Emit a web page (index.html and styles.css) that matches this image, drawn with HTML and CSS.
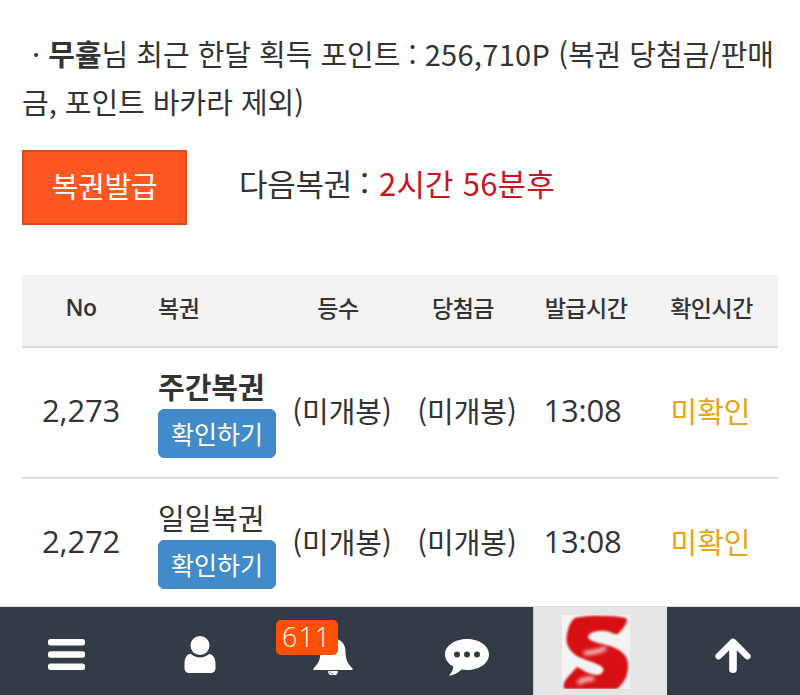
FILE: index.html
```html
<!DOCTYPE html>
<html lang="ko">
<head>
    <meta charset="UTF-8">
    <title>복권</title>
    <link rel="stylesheet" href="styles.css">
</head>

<body>
    <section class="content">
        <p class="summary">&nbsp;· <b>무휼</b>님 최근 한달 획득 포인트 : <span class="digits">256,710P</span> (복권 당첨금/판매금, 포인트 바카라 제외)</p>

        <div class="issue">
            <a class="issue-btn">복권발급</a>
            <span class="next">다음복권 : <em>2시간 56분후</em></span>
        </div>

        <table class="lotto">
            <thead>
                <tr>
                    <th class="col-no">No</th>
                    <th class="col-name">복권</th>
                    <th class="col-rank">등수</th>
                    <th class="col-prize">당첨금</th>
                    <th class="col-time">발급시간</th>
                    <th class="col-check">확인시간</th>
                </tr>
            </thead>
            <tbody>
                <tr>
                    <td class="num">2,273</td>
                    <td class="col-name"><strong>주간복권</strong><a class="check-btn">확인하기</a></td>
                    <td class="sealed">(미개봉)</td>
                    <td class="sealed">(미개봉)</td>
                    <td class="num time">13:08</td>
                    <td class="unread">미확인</td>
                </tr>
                <tr>
                    <td class="num">2,272</td>
                    <td class="col-name"><span>일일복권</span><a class="check-btn">확인하기</a></td>
                    <td class="sealed">(미개봉)</td>
                    <td class="sealed">(미개봉)</td>
                    <td class="num time">13:08</td>
                    <td class="unread">미확인</td>
                </tr>
            </tbody>
        </table>
    </section>

    <nav class="bottom-nav">
        <a class="nav-item">
            <svg width="38" height="32" viewBox="0 0 38 32"><rect y="0" width="37" height="6.5" rx="2.5"/><rect y="12.3" width="37" height="6.5" rx="2.5"/><rect y="24.6" width="37" height="6.5" rx="2.5"/></svg>
        </a>
        <a class="nav-item">
            <svg width="32" height="37" viewBox="0 0 32 37"><circle cx="16" cy="9.500" r="9.500"/><path d="M7 18c2.500 2.300 5.500 3.500 9 3.500s6.500-1.200 9-3.500c4.500.5 6.500 4.500 6.500 10v4c0 3-2 5-5 5h-21c-3 0-5-2-5-5v-4c0-5.500 2-9.500 5.500-10z"/></svg>
        </a>
        <a class="nav-item bell">
            <svg width="40" height="40" viewBox="0 0 40 40"><path d="M20 1c2 0 3 1.500 3 3 6 1.200 9.500 6 9.500 12 0 9 2 12 7 17.500.5 1 0 1.500-1 1.500H1.500c-1 0-1.500-.5-1-1.500C5.500 28 7.500 25 7.500 16c0-6 3.500-10.800 9.500-12 0-1.500 1-3 3-3z"/><path d="M15 36h10a5 5 0 0 1-10 0z"/><path class="clapper" d="M16.500 35.500a3.500 3.500 0 0 0 4 3.500"/></svg>
            <span class="badge">611</span>
        </a>
        <a class="nav-item chat">
            <svg width="44" height="37" viewBox="0 0 44 37"><path d="M22 0c12 0 22 6.500 22 15.500S34 31 22 31c-2 0-3.800-.2-5.500-.5C13 34 8 36.500 4 36.500c2.500-2.500 4-5.500 4.300-9C3.200 24.800 0 20.500 0 15.500 0 6.500 10 0 22 0z"/><g class="dots"><circle cx="12" cy="15.500" r="3"/><circle cx="22" cy="15.500" r="3"/><circle cx="32" cy="15.500" r="3"/></g></svg>
        </a>
        <a class="nav-item logo">
            <svg width="68" height="74" viewBox="0 0 68 74"><rect width="68" height="74" fill="#f3f3f3"/><path class="logo-s" d="M13 3C25 0 50 0 64 3 67 6 62 13 56 19 53 20 50 17 44 16 36 15 27 17 26 22 27 27 38 28 48 31 60 35 67 42 66 52 66 62 60 70 55 74L3 74C0 72 2 66 6 62L15 52C20 54 26 60 36 60 41 59 43 55 40 52 36 48 22 45 15 41 7 36 3 28 5 20 6 12 9 6 13 3Z"/><path class="logo-shine" d="M22 38C30 38 38 36 44 33M16 68C22 64 26 63 32 64"/></svg>
        </a>
        <a class="nav-item">
            <svg width="38" height="36" viewBox="0 0 38 36"><path d="M19 1.500c.9 0 1.700.4 2.300 1l14.500 14.500c1.300 1.300 1.300 3.300 0 4.600-1.300 1.300-3.300 1.300-4.600 0l-8.400-8.400v19.800c0 1.800-1.500 3-3.800 3s-3.800-1.200-3.800-3V13.200l-8.400 8.400c-1.300 1.300-3.300 1.300-4.600 0-1.300-1.300-1.300-3.300 0-4.600L16.700 2.500c.6-.6 1.400-1 2.300-1z"/></svg>
        </a>
    </nav>
</body>
</html>
```

FILE: styles.css
```css
* {
    box-sizing: border-box;
}

html, body {
    height: 100%;
}

body {
    margin: 0;
    overflow: hidden;
    background: #fff;
    color: #333;
    font-family: "Noto Sans CJK KR", "Noto Sans", sans-serif;
}

.content {
    padding: 29px 22px 0;
}

.summary {
    margin: 0;
    font-size: 29px;
    line-height: 48px;
    letter-spacing: -0.03px;
    text-indent: 2px;
}

.digits {
    letter-spacing: 0.3px;
}

.issue {
    display: flex;
    align-items: center;
    margin-top: 25px;
}

.issue-btn {
    width: 165px;
    height: 75px;
    line-height: 67px;
    text-align: center;
    background: #ff5722;
    border: 2px solid #d84b20;
    color: #fff;
    font-size: 29px;
    letter-spacing: -0.3px;
}

.next {
    margin-left: 52px;
    margin-bottom: 10px;
    font-size: 31px;
    letter-spacing: -0.3px;
}

.next em {
    margin-left: 2px;
    font-style: normal;
    letter-spacing: 0.2px;
    color: #c9151b;
}

.lotto {
    width: 756px;
    margin-top: 50px;
    border-collapse: collapse;
    table-layout: fixed;
}

.lotto th {
    height: 72px;
    background: #f3f3f3;
    border-bottom: 2px solid #ddd;
    font-size: 23px;
    font-weight: 500;
    text-align: center;
    padding: 0 0 7px;
    letter-spacing: -0.5px;
}

.lotto td {
    height: 131px;
    border-bottom: 2px solid #ddd;
    font-size: 29px;
    text-align: center;
    padding: 0 0 6px;
}

.col-no { width: 118px; }
.col-rank { width: 122px; }
.col-prize { width: 128px; }
.col-time { width: 118px; }

.lotto th.col-no {
    font-family: "Open Sans", sans-serif;
    font-weight: 600;
}

.lotto th.col-name, .lotto td.col-name {
    width: 137px;
    padding-left: 18px;
    text-align: left;
}

.lotto td.col-name {
    padding-bottom: 2px;
}

.col-name strong, .col-name span {
    display: block;
    line-height: 40px;
}

.lotto .sealed {
    padding-left: 8px;
}

.lotto .num {
    font-family: "Open Sans", sans-serif;
    font-size: 31px;
    letter-spacing: -0.2px;
}

.lotto .time {
    padding-right: 7px;
}

.lotto .unread {
    padding-right: 2px;
    color: #e8a317;
}

.check-btn {
    display: block;
    width: 118px;
    height: 49px;
    margin-top: 3px;
    line-height: 46px;
    text-align: center;
    background: #428bca;
    border: 1px solid #3d85c4;
    border-radius: 6px;
    color: #fff;
    font-size: 25px;
}

.bottom-nav {
    position: fixed;
    left: 0;
    right: 0;
    bottom: 0;
    height: 89px;
    display: grid;
    grid-template-columns: repeat(6, 1fr);
    background: #323b46;
    border-top: 1px solid #ddd;
}

.nav-item {
    position: relative;
    display: flex;
    align-items: center;
    justify-content: center;
    padding-top: 7px;
    fill: #fff;
}

.chat {
    padding-top: 13px;
}

.dots {
    fill: #323b46;
}

.clapper {
    fill: none;
    stroke: #8a9099;
    stroke-width: 1;
}

.logo {
    padding: 2px 8px 0 0;
    background: #e5e5e5;
    border-left: 1px solid #ccc;
}

.logo-s {
    fill: #d60f12;
    filter: blur(1.2px);
}

.logo-shine {
    fill: none;
    stroke: #fbe3e3;
    stroke-width: 4;
    filter: blur(2px);
}

.badge {
    position: absolute;
    left: 9px;
    top: 13px;
    width: 62px;
    height: 35px;
    line-height: 34px;
    text-align: center;
    border-radius: 5px;
    background: #ff5000;
    color: #fff;
    font-family: "Open Sans", sans-serif;
    font-size: 27px;
    font-weight: 300;
    letter-spacing: 1px;
}
```
